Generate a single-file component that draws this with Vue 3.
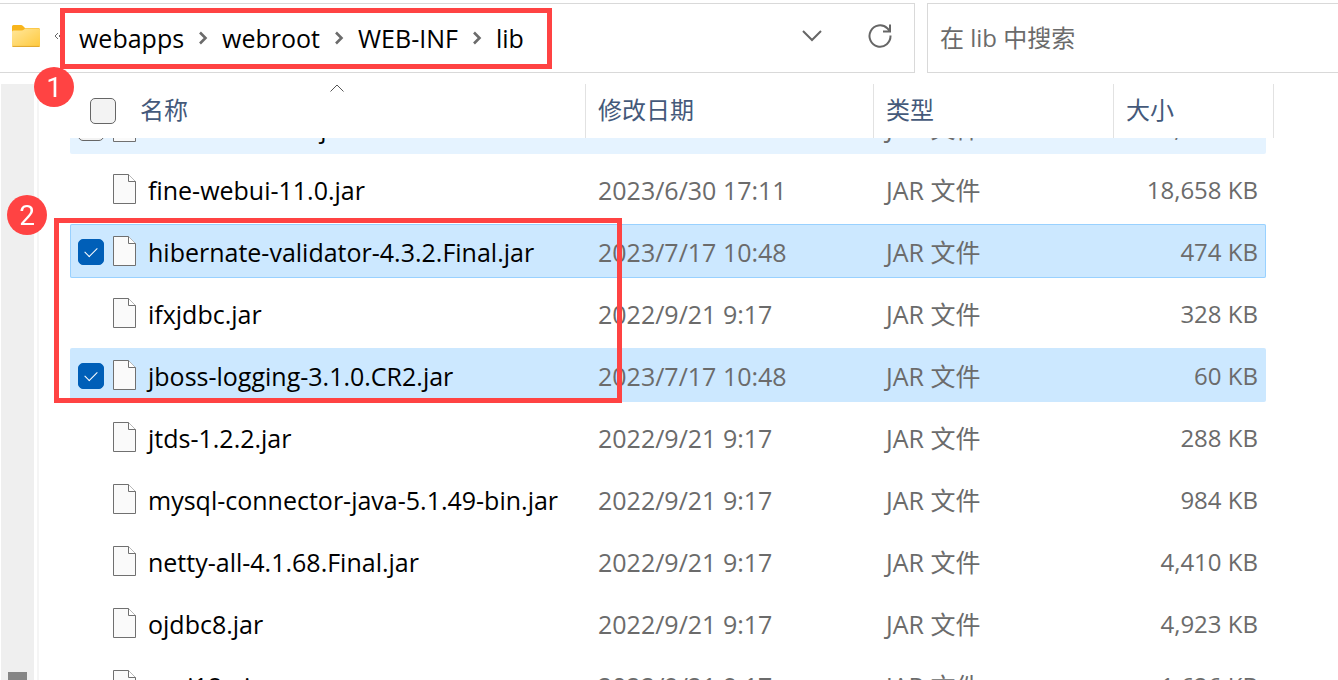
<script setup>
import { onMounted, ref } from 'vue'

const path = ['webapps', 'webroot', 'WEB-INF', 'lib']
const files = ref([
  { name: 'fine-third-11.0.jar', date: '2023/6/30 17:11', size: '18,204 KB', hover: true },
  { name: 'fine-webui-11.0.jar', date: '2023/6/30 17:11', size: '18,658 KB' },
  { name: 'hibernate-validator-4.3.2.Final.jar', date: '2023/7/17 10:48', size: '474 KB', checked: true, focus: true },
  { name: 'ifxjdbc.jar', date: '2022/9/21 9:17', size: '328 KB' },
  { name: 'jboss-logging-3.1.0.CR2.jar', date: '2023/7/17 10:48', size: '60 KB', checked: true },
  { name: 'jtds-1.2.2.jar', date: '2022/9/21 9:17', size: '288 KB' },
  { name: 'mysql-connector-java-5.1.49-bin.jar', date: '2022/9/21 9:17', size: '984 KB' },
  { name: 'netty-all-4.1.68.Final.jar', date: '2022/9/21 9:17', size: '4,410 KB' },
  { name: 'ojdbc8.jar', date: '2022/9/21 9:17', size: '4,923 KB' },
  { name: 'orai18n.jar', date: '2022/9/21 9:17', size: '1,626 KB' }
])
const pane = ref(null)
onMounted(() => { pane.value.scrollTop = 46 })
</script>

<template>
  <div class="explorer">
    <header class="toolbar">
      <nav class="address" aria-label="路径">
        <svg class="folder" width="28" height="24" viewBox="0 0 28 24" aria-hidden="true">
          <defs>
            <linearGradient id="fold" x1="0" y1="0" x2="1" y2="1">
              <stop offset="0" stop-color="#ffe79c" />
              <stop offset="1" stop-color="#ffc93c" />
            </linearGradient>
          </defs>
          <path d="M0 2.5Q0 1 1.500 1H9Q10 1 11 2L13 4H26.500Q28 4 28 5.500V12H0Z" fill="#f8b51c" />
          <path d="M0 8Q0 6.500 1.500 6.500H9.500Q11 6.500 12 5.500L13 4.500H26.500Q28 4.500 28 6V21.500Q28 23 26.500 23H1.500Q0 23 0 21.500Z" fill="url(#fold)" />
          <path d="M0.500 22.400H27.500" stroke="#dfa52c" />
        </svg>
        <svg class="overflow" width="10" height="10" viewBox="0 0 10 10" fill="none" stroke="#666" aria-hidden="true">
          <path d="M4 2L1 5L4 8M8 2L5 5L8 8" />
        </svg>
        <ol class="crumbs">
          <li v-for="(p, i) in path" :key="p">
            <a href="#">{{ p }}</a>
            <svg v-if="i < path.length - 1" width="10" height="14" viewBox="0 0 10 14" fill="none" stroke="#6b6b6b" stroke-width="2.600" aria-hidden="true">
              <path d="M2 1.500L7.500 7L2 12.500" />
            </svg>
          </li>
        </ol>
        <button class="icon-btn" aria-label="展开">
          <svg width="20" height="12" viewBox="0 0 20 12" fill="none" stroke="#666" stroke-width="2"><path d="M1 1L10 10L19 1" /></svg>
        </button>
        <button class="icon-btn" aria-label="刷新">
          <svg width="24" height="24" viewBox="0 0 24 24" fill="none" stroke="#666" stroke-width="2">
            <path d="M22.500 11.500A10.500 10.700 0 1 1 19.300 4.300L22 7M22 0.500V7.500H15" />
          </svg>
        </button>
      </nav>
      <input class="search" type="search" placeholder="在 lib 中搜索" aria-label="在 lib 中搜索" />
    </header>

    <main class="body">
      <div class="nav-scroll"><div class="thumb"></div></div>
      <div ref="pane" class="pane">
        <table>
          <thead>
            <tr>
              <th class="name">
                <input type="checkbox" aria-label="全选" />
                <span>名称</span>
                <svg class="sort" width="14" height="8" viewBox="0 0 14 8" fill="none" stroke="#555" aria-hidden="true"><path d="M0.500 7.500L7 1L13.500 7.500" /></svg>
              </th>
              <th>修改日期</th>
              <th>类型</th>
              <th>大小</th>
            </tr>
          </thead>
          <tbody>
            <tr v-for="f in files" :key="f.name" :class="{ hover: f.hover, selected: f.checked, focus: f.focus }">
              <td class="name">
                <input v-model="f.checked" type="checkbox" :aria-label="f.name" />
                <svg class="file" width="23" height="30" viewBox="0 0 23 30" fill="#fafafa" stroke="#707070" aria-hidden="true">
                  <path d="M0.500 0.500H15.500L22.500 7.500V29.500H0.500Z" />
                  <path d="M15.500 0.500V7.500H22.500" fill="#fff" />
                </svg>
                <span>{{ f.name }}</span>
              </td>
              <td>{{ f.date }}</td>
              <td>JAR 文件</td>
              <td class="size">{{ f.size }}</td>
            </tr>
          </tbody>
        </table>
      </div>
    </main>

    <div class="mark mark-path"></div>
    <div class="mark mark-files"></div>
    <div class="badge badge-one">1</div>
    <div class="badge badge-two">2</div>
  </div>
</template>

<style>
body { background: #fff; }
</style>

<style scoped>
.explorer {
  position: relative;
  display: flex;
  flex-direction: column;
  height: 100vh;
  overflow: hidden;
  font-family: "Open Sans", "Noto Sans CJK SC", sans-serif;
  font-size: 24px;
  line-height: 32px;
  color: #000;
  background: #fff;
}
.explorer * { box-sizing: border-box; }
.toolbar {
  display: flex;
  gap: 12px;
  height: 70px;
  margin-top: 3px;
  flex: none;
}
.address {
  display: flex;
  align-items: center;
  flex: 1;
  padding: 0 20px 4px 12px;
  border: 1px solid #d9d9d9;
  border-left: 0;
}
.folder, .overflow { flex: none; }
.overflow { margin-left: 14px; }
.crumbs {
  display: flex;
  flex: 1;
  margin: 0 0 0 15px;
  padding: 4px 0 0;
  list-style: none;
  font-size: 25px;
}
.crumbs li { display: flex; align-items: center; }
.crumbs a { color: #000; text-decoration: none; }
.crumbs svg { margin: 0 14px; }
.icon-btn {
  display: grid;
  place-items: center;
  width: 28px;
  height: 40px;
  margin-left: 40px;
  padding: 0;
  border: 0;
  background: none;
}
.search {
  width: 411px;
  padding: 0 12px;
  border: 1px solid #d9d9d9;
  border-right: 0;
  border-radius: 0;
  outline: 0;
  font: inherit;
  color: #666;
  background: #fff;
  appearance: none;
}
.search::placeholder { color: #6b6b6b; opacity: 1; }
.body {
  display: flex;
  flex: 1;
  min-height: 0;
  margin-top: 11px;
}
.nav-scroll {
  display: flex;
  flex-direction: column;
  justify-content: flex-end;
  width: 33px;
  margin-left: 1px;
  padding: 0 7px;
  background: #efefef;
}
.thumb { height: 8px; background: #858585; }
.pane {
  flex: 1;
  margin-left: 3px;
  padding: 0 64px 0 31px;
  border-left: 2px solid #f5f5f5;
  overflow: hidden;
}
table, thead, tbody { display: block; }
thead {
  position: sticky;
  top: 0;
  z-index: 1;
  background: #fff;
}
tr {
  display: grid;
  grid-template-columns: minmax(0, 1fr) 288px 240px 160px;
  height: 54px;
}
tbody tr {
  grid-template-columns: minmax(0, 1fr) 288px 240px 152px;
  margin: 8px 8px 0 0;
  border-radius: 2px;
}
th, td {
  display: flex;
  align-items: center;
  font-weight: 400;
  color: #6b6b6b;
  white-space: nowrap;
}
th {
  position: relative;
  padding: 0 12px 2px;
  border-right: 1px solid #e2e2e2;
  color: #44597a;
}
th input { margin-top: 2px; }
td { padding: 2px 12px 0; font-size: 25px; }
th.name { padding-left: 20px; gap: 24px; }
td.name { padding-left: 8px; color: #000; }
td.size { justify-content: flex-end; padding-right: 8px; font-size: 24px; }
.file { flex: none; margin: 0 12px 2px 9px; }
.sort { position: absolute; top: 0; left: calc(50% + 2px); }
input[type="checkbox"] {
  flex: none;
  width: 26px;
  height: 26px;
  margin: 0;
  border: 1px solid #666;
  border-radius: 5px;
  background: #f3f3f3;
  appearance: none;
}
th input[type="checkbox"] { margin-top: 2px; }
tbody input[type="checkbox"] { visibility: hidden; }
tbody .hover input[type="checkbox"], tbody .selected input[type="checkbox"] { visibility: visible; }
input[type="checkbox"]:checked {
  display: grid;
  place-items: center;
  border-color: #005fb8;
  background: #005fb8;
}
input[type="checkbox"]:checked::after {
  content: "";
  width: 11px;
  height: 6px;
  margin-bottom: 3px;
  border: solid #fff;
  border-width: 0 0 1px 1px;
  transform: rotate(-45deg);
}
.hover { background: #e5f3ff; }
.selected { background: #cce8ff; }
.focus { box-shadow: inset 0 0 0 1px #99d1ff; }
.mark {
  position: absolute;
  z-index: 2;
  border: 5px solid #ff4343;
  pointer-events: none;
}
.mark-path { top: 8px; left: 60px; width: 492px; height: 61px; }
.mark-files { top: 218px; left: 54px; width: 568px; height: 185px; }
.badge {
  position: absolute;
  z-index: 3;
  width: 40px;
  height: 40px;
  border-radius: 50%;
  font: 28px/42px Roboto, sans-serif;
  text-align: center;
  color: #fff;
  background: #ff4343;
}
.badge-one { top: 67px; left: 34px; }
.badge-two { top: 195px; left: 7px; }
</style>
